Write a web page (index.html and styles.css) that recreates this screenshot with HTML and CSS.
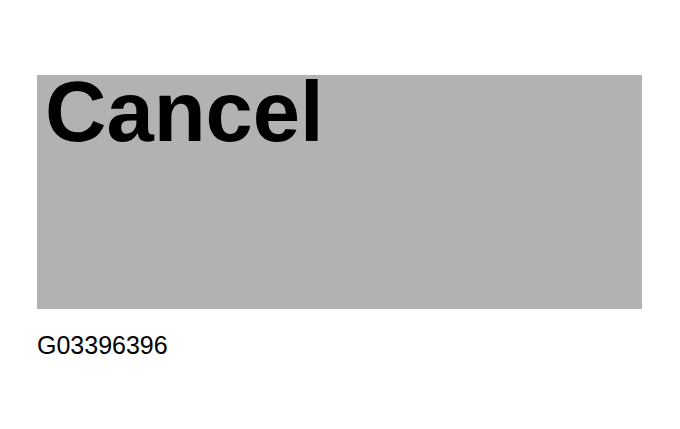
FILE: index.html
```html
<!DOCTYPE html>
<html>
<head>
<meta charset="utf-8">
<link rel="stylesheet" href="styles.css">
</head>
<body>
<div class="figure">
  <div class="panel">
    <div class="panel-label">Cancel</div>
  </div>
  <div class="caption">G03396396</div>
</div>
</body>
</html>
```
FILE: styles.css
```css
html, body {
  margin: 0;
  padding: 0;
  background: #ffffff;
}
.figure {
  padding: 75px 0 0 37px;
  font-family: "Liberation Sans", Arial, sans-serif;
}
.panel {
  width: 605px;
  height: 234px;
  background: #b2b2b2;
  box-sizing: border-box;
  padding-left: 8px;
}
.panel-label {
  font-size: 85px;
  font-weight: bold;
  line-height: 73px;
  color: #000;
}
.caption {
  margin-top: 22px;
  font-size: 25px;
  color: #000;
  line-height: normal;
}
```
